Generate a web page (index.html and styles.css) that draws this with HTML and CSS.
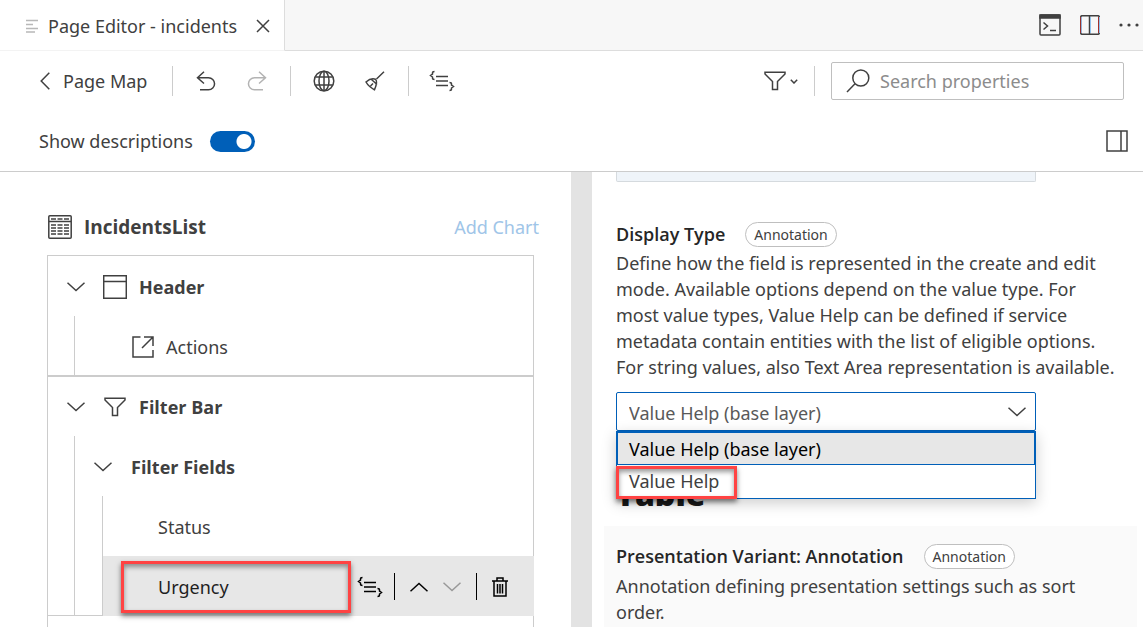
FILE: index.html
```html
<!DOCTYPE html>
<html lang="en">
<head>
<meta charset="utf-8">
<title>Page Editor - incidents</title>
<link rel="stylesheet" href="styles.css">
</head>
<body>
<svg class="defs" aria-hidden="true">
  <symbol id="chevron-down" viewBox="0 0 18 10"><path d="M0.500 0.800 9 8.500 17.500 0.800"/></symbol>
  <symbol id="chevron-up" viewBox="0 0 18 10"><path d="M0.500 9.200 9 1.500 17.500 9.200"/></symbol>
  <symbol id="funnel" viewBox="0 0 22 20"><path d="M1 1.200H21V3L13.500 10.500V18.500H8.500V10.500L1 3Z"/></symbol>
  <symbol id="code" viewBox="0 0 26 22"><path d="M7 6.500H19M7 11H19M7 15.500H19"/><path d="M5.500 1.500Q3.500 1.500 3.500 3V4L1.500 5.500 3.500 7V8Q3.500 9.500 5.500 9.500M20.500 12.500Q22.500 12.500 22.500 14V15L24.500 16.500 22.500 18V19Q22.500 20.500 20.500 20.500"/></symbol>
</svg>

<header class="tabs">
  <div class="tab">
    <svg class="icon tab-icon" width="14" height="14" viewBox="0 0 14 14"><path d="M1 1.500H13M1 5.500H8M1 9.500H13M1 13H10"/></svg>
    <span>Page Editor - incidents</span>
    <button class="plain tab-close" aria-label="Close tab"><svg class="icon" width="14" height="14" viewBox="0 0 14 14"><path d="M1 1 13 13M13 1 1 13"/></svg></button>
  </div>
  <div class="tab-actions">
    <button class="plain" aria-label="Open terminal"><svg class="icon" width="22" height="22" viewBox="0 0 22 22"><rect x="1" y="1" width="20" height="20" rx="1"/><path class="solid" d="M1 1H21V4H1Z"/><path d="M4.500 8.500 8.500 12 4.500 15.500M11 16.500H17"/></svg></button>
    <button class="plain" aria-label="Split editor"><svg class="icon" width="20" height="20" viewBox="0 0 20 20"><rect x="0.700" y="0.700" width="18.600" height="18.600" rx="1.500"/><path d="M9.500 1V19"/><path class="edge-blue" d="M1.500 2V18M10.500 2V18M19.500 2V18"/><path class="edge-red" d="M0.600 2V18M18.500 2V18"/></svg></button>
    <button class="plain" aria-label="More actions"><svg class="dots" width="20" height="4" viewBox="0 0 20 4"><circle cx="2" cy="2" r="1.600"/><circle cx="10" cy="2" r="1.600"/><circle cx="18" cy="2" r="1.600"/></svg></button>
  </div>
</header>

<section class="toolbar">
  <button class="plain back"><svg class="icon" width="10" height="18" viewBox="0 0 10 18"><path d="M9.300 0.800 1.200 9 9.300 17.200"/></svg>Page Map</button>
  <div class="tool-group">
    <button class="plain" aria-label="Undo"><svg class="icon" width="20" height="20" viewBox="0 0 20 20"><path d="M8 0.800 1.500 6.700 8 12.500M1.500 6.700H12.500A6 6 0 0 1 12.500 18.800H4"/></svg></button>
    <button class="plain faded" aria-label="Redo" disabled><svg class="icon" width="20" height="20" viewBox="0 0 20 20"><path d="M12 0.800 18.500 6.700 12 12.500M18.500 6.700H7.500A6 6 0 0 0 7.500 18.800H16"/></svg></button>
  </div>
  <div class="tool-group cleanup">
    <button class="plain" aria-label="Translate"><svg class="icon" width="22" height="22" viewBox="0 0 22 22"><circle cx="11" cy="11" r="9.800"/><path d="M2.500 7H19.500M2.500 15H19.500M11 1V21"/><ellipse cx="11" cy="11" rx="5" ry="9.800"/></svg></button>
    <button class="plain" aria-label="Clean up"><svg class="icon" width="20" height="20" viewBox="0 0 20 20"><path d="M19 0.800 11.500 8M1 11Q6 6.500 10.500 8.200 13 10.500 9.500 18.800Q3.500 15.500 1 11ZM6.500 8.500 12 13.500M5.500 15 8 12.500"/></svg></button>
  </div>
  <div class="tool-group source">
    <button class="plain" aria-label="Show source"><svg class="icon" width="26" height="22"><use href="#code"/></svg></button>
  </div>
  <div class="filter-group">
    <button class="plain filter" aria-label="Filter properties"><svg class="icon" width="22" height="20"><use href="#funnel"/></svg><svg class="icon" width="8" height="5" viewBox="0 0 8 5"><path d="M0.800 0.800 4 4 7.200 0.800"/></svg></button>
  </div>
  <label class="search">
    <svg class="icon" width="24" height="24" viewBox="0 0 24 24"><circle cx="14.800" cy="9" r="8"/><path d="M9 14.800 1 23"/></svg>
    <input type="text" placeholder="Search properties" aria-label="Search properties">
  </label>
</section>

<section class="options">
  <label for="descriptions">Show descriptions</label>
  <input class="switch" id="descriptions" type="checkbox" checked>
  <button class="plain panel-toggle" aria-label="Toggle panel"><svg class="icon" width="22" height="22" viewBox="0 0 22 22"><path d="M1 1H21V21H1ZM15 1V21"/></svg></button>
</section>

<main class="workspace">
  <section class="outline">
    <div class="outline-head">
      <svg class="icon" width="24" height="24" viewBox="0 0 24 24"><rect x="0.800" y="0.800" width="22.400" height="22.400" rx="1"/><path d="M1 6.500H23"/><path class="cells" d="M3 4H21M3 10H21M3 13H21M3 16H21M3 19H21"/></svg>
      <h1>IncidentsList</h1>
      <a class="add-chart" href="#">Add Chart</a>
    </div>
    <div class="tree">
      <div class="branch">
        <div class="row top">
          <button class="plain" aria-label="Collapse Header"><svg class="icon" width="18" height="10"><use href="#chevron-down"/></svg></button>
          <svg class="icon" width="24" height="24" viewBox="0 0 24 24"><path d="M0.700 0.700H23.300V23.300H0.700ZM0.700 6.500H23.300"/></svg>
          <strong>Header</strong>
        </div>
        <div class="level first">
          <div class="row action">
            <svg class="icon" width="22" height="22" viewBox="0 0 22 22"><path d="M8.500 1H1V21H21V14M12 1H21V10M21 1 10 12"/></svg>
            <span>Actions</span>
          </div>
        </div>
      </div>
      <div class="branch filters">
        <div class="row top">
          <button class="plain" aria-label="Collapse Filter Bar"><svg class="icon" width="18" height="10"><use href="#chevron-down"/></svg></button>
          <svg class="icon node-icon" width="22" height="20"><use href="#funnel"/></svg>
          <strong>Filter Bar</strong>
        </div>
        <div class="level first">
          <div class="row sub">
            <button class="plain" aria-label="Collapse Filter Fields"><svg class="icon" width="18" height="10"><use href="#chevron-down"/></svg></button>
            <strong>Filter Fields</strong>
          </div>
          <div class="level second">
            <div class="row leaf">Status</div>
            <div class="row leaf selected">
              <span>Urgency</span>
              <div class="row-tools">
                <button class="plain" aria-label="Show source"><svg class="icon" width="26" height="22"><use href="#code"/></svg></button>
                <div class="move">
                  <button class="plain" aria-label="Move up"><svg class="icon" width="18" height="10"><use href="#chevron-up"/></svg></button>
                  <button class="plain down" aria-label="Move down" disabled><svg class="icon" width="18" height="10"><use href="#chevron-down"/></svg></button>
                </div>
                <button class="plain" aria-label="Delete"><svg class="icon" width="18" height="20" viewBox="0 0 18 20"><path d="M1 4H17M6 4V1H12V4M3 4V19H15V4M6.500 7V16.500M9 7V16.500M11.500 7V16.500"/></svg></button>
              </div>
              <i class="marker marker-row"></i>
            </div>
          </div>
        </div>
      </div>
      <div class="branch next"></div>
    </div>
  </section>

  <div class="splitter" role="separator"></div>

  <section class="properties">
    <div class="readonly-field"></div>
    <div class="property">
      <div class="property-head"><label for="display-type">Display Type</label><span class="pill">Annotation</span></div>
      <p>Define how the field is represented in the create and edit mode. Available options depend on the value type. For most value types, Value Help can be defined if service metadata contain entities with the list of eligible options. For string values, also Text Area representation is available.</p>
      <div class="combo">
        <select id="display-type"><option>Value Help (base layer)</option></select>
        <svg class="icon combo-arrow" width="18" height="10"><use href="#chevron-down"/></svg>
        <ul class="menu" role="listbox" aria-label="Display Type">
          <li class="current" role="option" aria-selected="true">Value Help (base layer)</li>
          <li role="option" aria-selected="false">Value Help<i class="marker marker-option"></i></li>
        </ul>
      </div>
    </div>
    <h2>Table</h2>
    <div class="card">
      <div class="property-head"><h3>Presentation Variant: Annotation</h3><span class="pill">Annotation</span></div>
      <p>Annotation defining presentation settings such as sort order.</p>
    </div>
  </section>
</main>
</body>
</html>
```
FILE: styles.css
```css
* { box-sizing: border-box; }

body {
  margin: 0;
  height: 100vh;
  display: flex;
  flex-direction: column;
  overflow: hidden;
  background: #fff;
  color: #404040;
  font: 18px/26px "Noto Sans", "Open Sans", sans-serif;
}

h1, h2, h3, p, ul { margin: 0; padding: 0; }
h1, h2, h3, strong, .property-head label { font-family: "Open Sans", "Noto Sans", sans-serif; }
svg { display: block; flex: none; }
.defs { position: absolute; width: 0; height: 0; }

.icon { fill: none; stroke: currentColor; stroke-width: 1.5; }
.solid { fill: currentColor; }
.dots { fill: currentColor; }
.edge-red { stroke: #a4302a; stroke-width: 1; }
.edge-blue { stroke: #8fc3ee; stroke-width: 1; }
.cells { stroke-dasharray: 5 1.500; }

.plain {
  display: flex;
  align-items: center;
  padding: 0;
  border: 0;
  background: none;
  color: inherit;
  font: inherit;
}

/* Editor tabs */
.tabs {
  flex: none;
  display: flex;
  justify-content: space-between;
  height: 51px;
  background: #f7f7f7;
  border-bottom: 1px solid #ddd;
}
.tab {
  display: flex;
  align-items: center;
  height: 51px;
  padding: 1px 14px 0 25px;
  gap: 9px;
  background: #fff;
  border-right: 1px solid #ddd;
  border-bottom: 1px solid #f3f3f3;
}
.tab-icon { color: #b8b8b8; }
.tab-close { margin-left: 10px; }
.tab-actions { display: flex; align-items: center; gap: 19px; padding-right: 4px; }

/* Toolbar */
.toolbar {
  flex: none;
  display: flex;
  align-items: center;
  height: 60px;
  padding: 0 19px 0 40px;
}
.back { gap: 13px; margin-right: 25px; }
.tool-group, .filter-group { display: flex; align-items: center; height: 30px; }
.tool-group { border-left: 1px solid #ccc; gap: 31px; padding: 0 23px; }
.tool-group.cleanup { gap: 30px; padding-left: 22px; }
.tool-group.source { padding-left: 20px; }
.faded { color: #b3b3b3; }
.filter-group { margin-left: auto; padding-right: 16px; border-right: 1px solid #ccc; }
.filter { gap: 4px; }
.search {
  display: flex;
  align-items: center;
  gap: 10px;
  width: 293px;
  height: 38px;
  margin-left: 16px;
  padding: 0 14px;
  border: 1px solid #bfbfbf;
  border-radius: 2px;
}
.search input {
  flex: 1;
  min-width: 0;
  padding: 0;
  border: 0;
  outline: 0;
  background: none;
  font: inherit;
}
.search input::placeholder { color: #8c8c8c; opacity: 1; }

.options {
  flex: none;
  display: flex;
  align-items: center;
  height: 61px;
  padding: 0 15px 0 39px;
  border-bottom: 1px solid #ccc;
}
.switch {
  appearance: none;
  width: 45px;
  height: 21px;
  margin: 0 0 0 17px;
  border-radius: 11px;
  background: radial-gradient(circle at 34px 50%, #fff 7px, #005fb8 8px);
}
.panel-toggle { margin-left: auto; }

/* Workspace */
.workspace {
  flex: 1;
  min-height: 0;
  display: grid;
  grid-template-columns: 571fr 21px 551fr;
}
.splitter { background: #e3e3e3; }
.outline { display: flex; flex-direction: column; padding: 42px 37px 0 47px; overflow: hidden; }
.outline-head { display: flex; align-items: center; height: 26px; padding-left: 1px; margin: 0 -5px 15px 0; }
.outline-head h1 { margin-left: 12px; font-size: 19px; line-height: 26px; font-weight: 700; }
.add-chart { margin-left: auto; color: #a0c5e8; text-decoration: none; }
.tree { flex: 1; display: flex; flex-direction: column; }
.branch { border: 1px solid #ccc; }
.branch.next { flex: 1; min-height: 20px; border-top: 0; border-bottom: 0; }
.row { display: flex; align-items: center; height: 60px; padding-top: 1px; }
.row strong { font-weight: 700; }
.row.top { padding-left: 19px; gap: 18px; }
.row.top strong { margin-left: -6px; }
.filters .row.top { height: 59px; }
.node-icon { margin: 0 1px; }
.level { border-left: 1px solid #ccc; margin-bottom: -1px; }
.level.first { margin-left: 26px; }
.level.second { margin-left: 27px; }
.row.action { padding-left: 57px; gap: 12px; }
.row.sub { padding-left: 19px; gap: 19px; }
.row.leaf { padding-left: 55px; }
.row.selected {
  position: relative;
  justify-content: space-between;
  margin-right: -1px;
  padding-right: 25px;
  background: #e7e7e7;
  color: #1f1f1f;
}
.row-tools { display: flex; align-items: center; gap: 11px; color: #000; }
.move {
  display: flex;
  align-items: center;
  gap: 15px;
  height: 27px;
  margin-right: 3px;
  padding: 0 15px;
  border: 1px solid #000;
  border-width: 0 1px;
}
.down { color: #999; }
.marker {
  position: absolute;
  border: 3px solid #ff4343;
  box-shadow: 0 3px 5px rgba(0, 0, 0, .5), inset 0 3px 5px rgba(0, 0, 0, .4);
}
.marker-row { left: 18px; top: 5px; width: 230px; height: 52px; }

/* Properties */
.properties { min-width: 0; overflow: hidden; padding: 0 6px 0 12px; }
.readonly-field {
  width: 420px;
  height: 10px;
  margin-left: 12px;
  background: #eff4f9;
  border: 1px solid #d5dade;
  border-top: 0;
  border-radius: 0 0 2px 2px;
}
.property { padding: 39px 12px 0; }
.property-head { display: flex; align-items: center; gap: 20px; height: 26px; color: #262626; }
.property-head label, .property-head h3 { font-size: 18px; font-weight: 600; line-height: 26px; }
.pill {
  height: 25px;
  padding: 0 8px;
  border: 1px solid #bfbfbf;
  border-radius: 13px;
  background: #fff;
  color: #404040;
  font-size: 14px;
  line-height: 23px;
}
.property p { margin: 3px 0 12px; padding-right: 8px; }
.combo { position: relative; width: 420px; }
.combo select {
  appearance: none;
  display: block;
  width: 100%;
  height: 39px;
  padding: 2px 12px 0;
  border: 1px solid #005fb8;
  border-radius: 2px;
  background: #fff;
  color: #595959;
  font: inherit;
}
.combo-arrow { position: absolute; right: 10px; top: 15px; pointer-events: none; }
.menu {
  position: absolute;
  z-index: 1;
  top: 100%;
  left: 0;
  right: 0;
  border: 1px solid #005fb8;
  background: #fff;
  box-shadow: 0 4px 14px rgba(0, 0, 0, .2);
  list-style: none;
}
.menu li { position: relative; height: 33px; padding: 0 12px; line-height: 33px; }
.menu .current { padding: 0 11px; border: 1px solid #005fb8; background: #e7e7e7; color: #000; }
.marker-option { left: -1px; top: 1px; width: 121px; height: 33px; }
h2 { margin: 48px 0 0 12px; color: #1a1a1a; font-size: 32px; line-height: 30px; font-weight: 800; }
.card { height: 120px; margin-top: 17px; padding: 17px 12px; background: #fafafa; }
.card p { margin-top: 4px; }
```
